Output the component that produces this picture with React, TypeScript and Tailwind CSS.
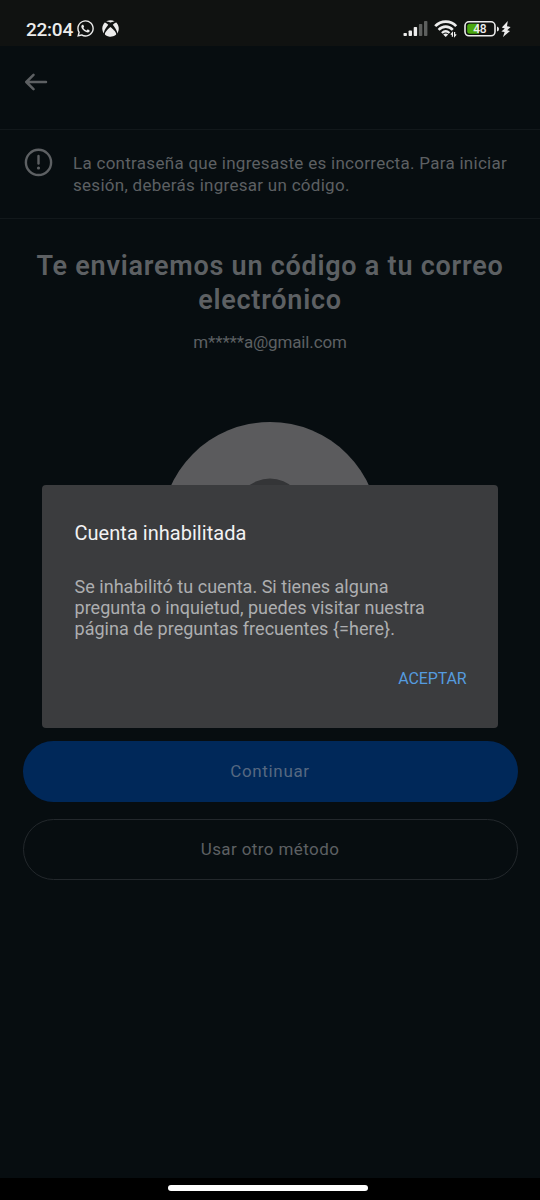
import { FaWhatsapp, FaXbox } from "react-icons/fa";

export default function App() {
  return (
    <div className="relative flex h-[1200px] w-[540px] flex-col overflow-hidden bg-[#070d10] font-[Roboto,sans-serif] text-[#5d6063]">
      <StatusBar />
      <header className="flex h-[84px] items-center border-b border-[#12181b] pl-[25px] pb-[11px]">
        <BackIcon />
      </header>
      <Banner />
      <main className="flex flex-col items-center px-[22.5px]">
        <h1 className="mt-[30px] text-center text-[27px] leading-[34px] font-semibold">
          <span className="block tracking-[0.75px] whitespace-nowrap">Te enviaremos un código a tu correo</span>
          <span className="block tracking-[0.75px]">electrónico</span>
        </h1>
        <p className="mt-[14px] text-[17px] leading-[22px] tracking-[-0.15px]">m*****a@gmail.com</p>
        <Avatar />
        <button className="mt-[101px] h-[61px] w-full rounded-full bg-[#002859] pt-px text-[17px] tracking-[0.65px] text-[#566881]">
          Continuar
        </button>
        <button className="mt-[17px] h-[60.5px] w-full rounded-full border border-[#23282c] pt-px text-[17px] tracking-[0.4px]">
          Usar otro método
        </button>
      </main>
      <div className="mt-auto flex h-[22px] justify-center bg-black pt-[7px] pr-[4px]">
        <div className="h-[6px] w-[200px] rounded-full bg-white" />
      </div>
      <Dialog />
    </div>
  );
}

function StatusBar() {
  return (
    <div className="flex h-[46px] shrink-0 items-center bg-[#101211] pt-[12px] pl-[26px] text-[#ececec]">
      <span className="w-[47px] pt-px text-[19px] leading-[22px] font-medium tracking-[-0.25px] whitespace-nowrap">22:04</span>
      <FaWhatsapp className="mb-px ml-[3px] size-[19px]" />
      <FaXbox className="mb-px ml-[7px] size-[17px]" />
      <svg className="ml-auto" width="25" height="18" viewBox="0 0 25 18" fill="currentColor">
        <rect x="0.5" y="13" width="3.4" height="3" rx="0.8" />
        <rect x="5.6" y="10.5" width="3.4" height="5.5" rx="0.8" />
        <rect x="10.7" y="7" width="3.4" height="9" rx="0.8" />
        <rect x="15.9" y="4" width="3.4" height="12" rx="0.8" fill="#5d5f5e" />
        <rect x="21" y="1" width="3.4" height="15" rx="0.8" fill="#5d5f5e" />
      </svg>
      <svg className="ml-[6px]" width="24" height="18" viewBox="0 0 24 18" fill="none" stroke="currentColor">
        <path d="M1.2 6.2C7 0 16.6 0 22.2 6.2" strokeWidth="2.7" />
        <path d="M4.6 9.8C8.7 5.6 14.8 5.6 18.8 9.8" strokeWidth="2.6" />
        <path d="M7.9 13C10.2 10.8 13.2 10.8 15.5 13" strokeWidth="2.3" />
        <path d="M9.2 14.4 11.7 17 14.2 14.4Q11.7 12.6 9.2 14.4Z" fill="currentColor" stroke="none" />
        <path d="M18.4 16.8V12.8L16.8 14.6M20.6 12V16.2L22.2 14.4" strokeWidth="1.2" />
      </svg>
      <svg className="ml-[6px]" width="37" height="18" viewBox="0 0 37 18">
        <rect x="1" y="1.8" width="30" height="14" rx="4" fill="none" stroke="currentColor" strokeWidth="1.6" />
        <path d="M6 3.8H15V13.8H6Q3.2 13.8 3.2 11.3V6.3Q3.2 3.8 6 3.8Z" fill="#4aa70f" />
        <path d="M33 6.4Q35 6.9 35 8.9T33 11.4Z" fill="currentColor" />
        <text x="15.8" y="13" textAnchor="middle" fill="currentColor" className="text-[12px] font-medium tracking-[-0.3px]">48</text>
      </svg>
      <svg className="mr-[29px]" width="10" height="18" viewBox="0 0 10 18" fill="currentColor">
        <path d="M6.8 1 0.8 7.6 3.8 8.4 0.4 11.4 3.6 12 2 17 9 11 6.2 10.2 9.6 7 6 6.2Z" />
      </svg>
    </div>
  );
}

function BackIcon() {
  return (
    <svg width="23" height="18" viewBox="0 0 23 18" fill="none" stroke="currentColor" strokeWidth="2.5" strokeLinecap="round" strokeLinejoin="round">
      <path d="M21 9H1.5M8.5 1.8 1.3 9 8.5 16.2" />
    </svg>
  );
}

function Banner() {
  return (
    <div className="flex h-[89px] shrink-0 border-b border-[#12181b] pl-[24px]">
      <svg className="mt-[18px] shrink-0" width="29" height="29" viewBox="0 0 29 29" fill="none" stroke="currentColor" strokeWidth="2.4">
        <circle cx="14.5" cy="14.4" r="12.6" />
        <path d="M14.5 8V15.6" strokeLinecap="round" />
        <circle cx="14.5" cy="20" r="1.6" fill="currentColor" stroke="none" />
      </svg>
      <p className="mt-[22px] ml-[20px] text-[17px] leading-[22px] tracking-[0.28px] whitespace-nowrap">
        <span className="block">La contraseña que ingresaste es incorrecta. Para iniciar</span>
        <span className="block">sesión, deberás ingresar un código.</span>
      </p>
    </div>
  );
}

function Avatar() {
  return (
    <svg className="mt-[69px] shrink-0" width="218" height="218" viewBox="0 0 218 218">
      <circle cx="109" cy="109" r="109" fill="#5b5b5d" />
      <circle cx="109" cy="91.5" r="35" fill="#343537" />
    </svg>
  );
}

function Dialog() {
  return (
    <div className="absolute top-[485px] left-[42px] flex h-[243px] w-[456px] flex-col rounded-[4px] bg-[#3b3c3e] px-[32.5px] tracking-[0.03px]">
      <h2 className="mt-[35px] text-[20px] leading-[26px] text-[#f2f2f3]">Cuenta inhabilitada</h2>
      <p className="mt-[30px] text-[18px] leading-[21px] whitespace-nowrap text-[#adaeb0]">
        <span className="block">Se inhabilitó tu cuenta. Si tienes alguna</span>
        <span className="block">pregunta o inquietud, puedes visitar nuestra</span>
        <span className="block">página de preguntas frecuentes {"{=here}"}.</span>
      </p>
      <button className="mt-[29px] mr-[-1px] self-end text-[16px] leading-[22px] tracking-[-0.15px] text-[#559bdf]">ACEPTAR</button>
    </div>
  );
}
